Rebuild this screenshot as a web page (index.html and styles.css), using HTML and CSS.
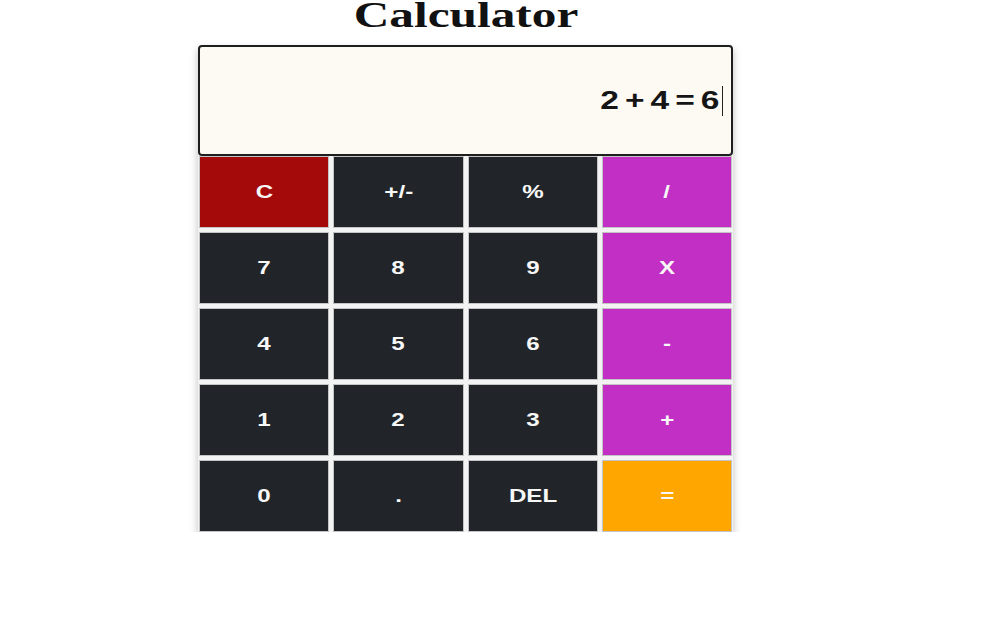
FILE: index.html
```html
<!DOCTYPE html>
<html>
<head>
<meta charset="utf-8">
<title>Calculator</title>
<link rel="stylesheet" href="styles.css">
</head>
<body>
<div class="page">
  <h1 class="title"><span class="wide">Calculator</span></h1>
  <div class="calc">
    <div class="display"><span class="value wide">2+4=6</span><span class="caret"></span></div>
    <div class="keys">
      <button class="key clear"><span class="wide">C</span></button>
      <button class="key"><span class="wide">+/-</span></button>
      <button class="key"><span class="wide">%</span></button>
      <button class="key op"><span class="wide">/</span></button>
      <button class="key"><span class="wide">7</span></button>
      <button class="key"><span class="wide">8</span></button>
      <button class="key"><span class="wide">9</span></button>
      <button class="key op"><span class="wide">X</span></button>
      <button class="key"><span class="wide">4</span></button>
      <button class="key"><span class="wide">5</span></button>
      <button class="key"><span class="wide">6</span></button>
      <button class="key op"><span class="wide">-</span></button>
      <button class="key"><span class="wide">1</span></button>
      <button class="key"><span class="wide">2</span></button>
      <button class="key"><span class="wide">3</span></button>
      <button class="key op"><span class="wide">+</span></button>
      <button class="key"><span class="wide">0</span></button>
      <button class="key"><span class="wide">.</span></button>
      <button class="key"><span class="wide">DEL</span></button>
      <button class="key equals"><span class="wide">=</span></button>
    </div>
  </div>
</div>
</body>
</html>
```
FILE: styles.css
```css
* { box-sizing: border-box; }
html, body { margin: 0; padding: 0; background: #ffffff; }
.page {
  width: 535px;
  margin-left: 198px;
}
.wide {
  display: inline-block;
  transform: scaleX(1.34);
}
.title {
  margin: 0 0 15px 0;
  height: 30px;
  line-height: 30px;
  text-align: center;
  font-family: "Liberation Serif", "Times New Roman", serif;
  font-weight: bold;
  font-size: 36px;
  color: #111;
}
.title .wide { transform: scaleX(1.37); }
.calc {
  width: 535px;
  box-shadow: 0 4px 8px rgba(0, 0, 0, 0.25);
}
.display {
  height: 111px;
  background: #fdfaf4;
  border: 2px solid #1e1e1e;
  border-radius: 4px;
  display: flex;
  align-items: center;
  justify-content: flex-end;
  padding-right: 8px;
  font-family: "Liberation Sans", Arial, sans-serif;
  font-weight: bold;
  font-size: 25px;
  color: #151515;
}
.display .value {
  letter-spacing: 4.5px;
  transform-origin: right center;
  margin-right: -3px;
}
.caret {
  width: 1px;
  height: 30px;
  background: #222;
}
.keys {
  display: grid;
  grid-template-columns: repeat(4, 1fr);
  grid-auto-rows: 72px;
  gap: 4px;
  padding: 0 1px;
  background: #f3f3f3;
}
.key {
  margin: 0;
  border: 1px solid #c4c4c4;
  background: #212529;
  color: #f7f7f7;
  font-family: "Liberation Sans", Arial, sans-serif;
  font-weight: bold;
  font-size: 18px;
  padding: 0;
  display: flex;
  align-items: center;
  justify-content: center;
}
.key.clear { background: #a50a0a; }
.key.op { background: #c22fc4; }
.key.equals { background: #ffa600; }
```
